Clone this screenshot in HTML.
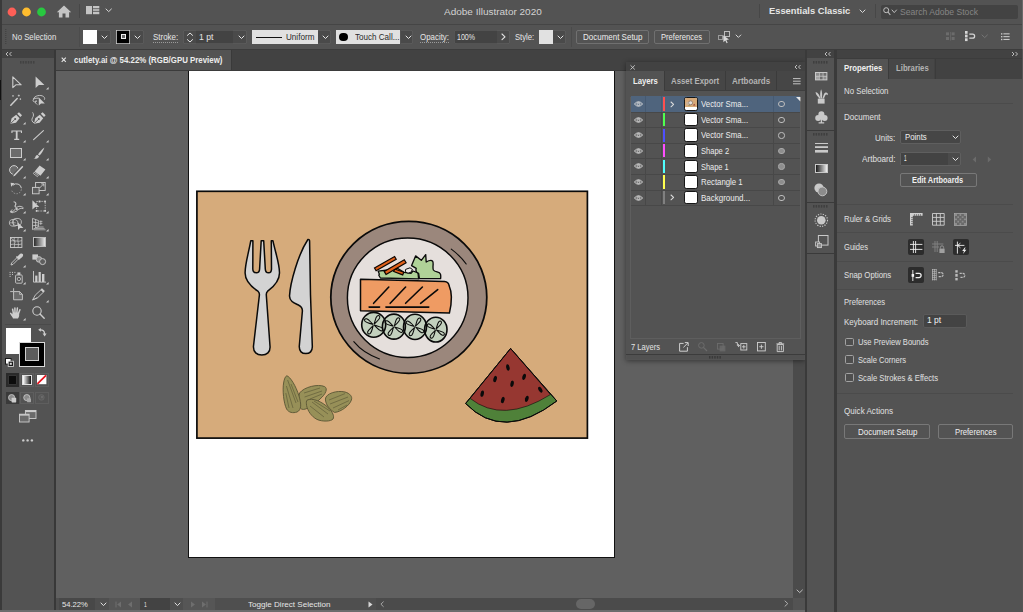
<!DOCTYPE html>
<html><head><meta charset="utf-8"><title>Adobe Illustrator 2020</title>
<style>
html,body{margin:0;padding:0;background:#535353}
body{width:1023px;height:612px;position:relative;overflow:hidden;font-family:"Liberation Sans",sans-serif}
body>div,body>svg,body>span{position:absolute}
svg{overflow:visible}
.t{white-space:pre;line-height:1;transform-origin:0 50%;display:block}
</style></head><body>
<div style="left:0px;top:0px;width:1023px;height:612px;background:#383838;"></div><div style="left:0px;top:0px;width:1023px;height:24.5px;background:#535353;"></div><div style="left:0px;top:24px;width:1023px;height:1px;background:#454545;"></div><div style="left:0px;top:25px;width:1023px;height:24px;background:#535353;"></div><div style="left:0px;top:48.6px;width:1023px;height:1px;background:#3c3c3c;"></div><div style="left:0px;top:0px;width:1.5px;height:612px;background:#3a3a3a;"></div><div style="left:0px;top:80px;width:1px;height:20px;background:#111;"></div><div style="left:1021.7px;top:0px;width:1.3px;height:49px;background:#6a6a6a;"></div><svg style="left:0px;top:0px" width="60" height="24" viewBox="0 0 60 24"><circle cx="12" cy="12" r="4.4" fill="#fe5f57"/><circle cx="26.5" cy="12" r="4.4" fill="#febc2e"/><circle cx="41.5" cy="12" r="4.4" fill="#28c840"/></svg><svg style="left:56px;top:5px" width="16" height="13" viewBox="0 0 16 13"><path d="M8 0.6L0.8 7.2H2.9V12.4H6.5V8.6H9.5V12.4H13.1V7.2H15.2Z" fill="#c4c4c4"/></svg><div style="left:79px;top:4px;width:1px;height:14px;background:#474747;"></div><svg style="left:86px;top:6px" width="14" height="9" viewBox="0 0 14 9"><rect x="0" y="0" width="6" height="8.2" fill="#c4c4c4"/><rect x="7" y="0" width="6.3" height="2.3" fill="#c4c4c4"/><rect x="7" y="3" width="6.3" height="2.3" fill="#b0b0b0"/><rect x="7" y="6" width="6.3" height="2.2" fill="#c4c4c4"/></svg><svg style="left:105.2px;top:8.2px" width="7.4" height="4.6" viewBox="-1 -1 7.4 4.6"><path d="M0 0L2.7 2.6L5.4 0" fill="none" stroke="#d8d8d8" stroke-width="1" stroke-linecap="round" stroke-linejoin="round"/></svg><span class="t" style="left:443.5px;top:7.11px;font-size:9.67px;font-weight:400;color:#d2d2d2;transform:scaleX(1.0351);">Adobe Illustrator 2020</span><div style="left:759px;top:4px;width:1px;height:14px;background:#474747;"></div><span class="t" style="left:769px;top:6.01px;font-size:9.67px;font-weight:700;color:#e6e6e6;transform:scaleX(0.9646);">Essentials Classic</span><svg style="left:859px;top:9.4px" width="7" height="4.5" viewBox="-1 -1 7 4.5"><path d="M0 0L2.5 2.5L5 0" fill="none" stroke="#d8d8d8" stroke-width="1" stroke-linecap="round" stroke-linejoin="round"/></svg><div style="left:875px;top:4px;width:1px;height:14px;background:#474747;"></div><div style="left:881px;top:5px;width:137px;height:13.5px;background:#434343;border-radius:2px"></div><svg style="left:883px;top:7px" width="8" height="9" viewBox="0 0 8 9"><circle cx="3.2" cy="3.2" r="2.5" fill="none" stroke="#c0c0c0" stroke-width="1"/><path d="M5 5L7.3 8" stroke="#c0c0c0" stroke-width="1.1"/></svg><svg style="left:891px;top:9.3px" width="6.5" height="4.6" viewBox="-1 -1 6.5 4.6"><path d="M0 0L2.25 2.6L4.5 0" fill="none" stroke="#bdbdbd" stroke-width="1" stroke-linecap="round" stroke-linejoin="round"/></svg><span class="t" style="left:899.5px;top:8.52px;font-size:8.28px;font-weight:400;color:#858585;transform:scaleX(1.0413);">Search Adobe Stock</span><svg style="left:5px;top:29px" width="2" height="15" viewBox="0 0 2 15"><rect x="0.3" y="0" width="1" height="1" fill="#3e3e3e"/><rect x="0.3" y="2" width="1" height="1" fill="#3e3e3e"/><rect x="0.3" y="4" width="1" height="1" fill="#3e3e3e"/><rect x="0.3" y="6" width="1" height="1" fill="#3e3e3e"/><rect x="0.3" y="8" width="1" height="1" fill="#3e3e3e"/><rect x="0.3" y="10" width="1" height="1" fill="#3e3e3e"/><rect x="0.3" y="12" width="1" height="1" fill="#3e3e3e"/><rect x="0.3" y="14" width="1" height="1" fill="#3e3e3e"/></svg><span class="t" style="left:12px;top:32.98px;font-size:8.37px;font-weight:400;color:#e6e6e6;transform:scaleX(0.9345);">No Selection</span><div style="left:79px;top:27px;width:1px;height:20px;background:#4c4c4c;"></div><div style="left:83px;top:29.7px;width:14.3px;height:14.3px;background:#fff;"></div><div style="left:97.3px;top:29.6px;width:13.3px;height:14.6px;background:#4a4a4a;border-radius:0 2.5px 2.5px 0;box-shadow:inset -0.8px 0 0 #5e5e5e,inset 0 0.8px 0 #5e5e5e,inset 0 -0.8px 0 #5e5e5e"></div><svg style="left:101.45px;top:34.9px" width="7" height="4.5" viewBox="-1 -1 7 4.5"><path d="M0 0L2.5 2.5L5 0" fill="none" stroke="#e4e4e4" stroke-width="1" stroke-linecap="round" stroke-linejoin="round"/></svg><div style="left:116px;top:29.7px;width:14.3px;height:14.3px;background:#000;box-shadow:inset 0 0 0 0.8px #d0d0d0"></div><div style="left:120.8px;top:34.4px;width:4.8px;height:4.8px;background:#666;box-shadow:inset 0 0 0 1px #eee"></div><div style="left:130.3px;top:29.6px;width:13.3px;height:14.6px;background:#4a4a4a;border-radius:0 2.5px 2.5px 0;box-shadow:inset -0.8px 0 0 #5e5e5e,inset 0 0.8px 0 #5e5e5e,inset 0 -0.8px 0 #5e5e5e"></div><svg style="left:134.45000000000002px;top:34.9px" width="7" height="4.5" viewBox="-1 -1 7 4.5"><path d="M0 0L2.5 2.5L5 0" fill="none" stroke="#e4e4e4" stroke-width="1" stroke-linecap="round" stroke-linejoin="round"/></svg><span class="t" style="left:152.8px;top:32.98px;font-size:8.37px;font-weight:400;color:#e6e6e6;transform:scaleX(0.9515);">Stroke:</span><div style="left:152.8px;top:42.2px;width:25.2px;height:0;border-top:1px dotted #9a9a9a"></div><div style="left:182.5px;top:29.6px;width:13.3px;height:14.6px;background:#4a4a4a;border-radius:2.5px 0 0 2.5px;box-shadow:inset 0.8px 0 0 #5e5e5e,inset 0 0.8px 0 #5e5e5e,inset 0 -0.8px 0 #5e5e5e"></div><svg style="left:185.5px;top:31.5px" width="8" height="11" viewBox="0 0 8 11"><path d="M1.4 3.4L4 1L6.6 3.4M1.4 7.6L4 10L6.6 7.6" fill="none" stroke="#e4e4e4" stroke-width="1" stroke-linecap="round" stroke-linejoin="round"/></svg><div style="left:196.2px;top:29.6px;width:36.8px;height:14.6px;background:#434343;box-shadow:inset 0 0.8px 0 #5a5a5a,inset 0 -0.8px 0 #5a5a5a"></div><span class="t" style="left:198.6px;top:32.98px;font-size:8.37px;font-weight:400;color:#e6e6e6;transform:scaleX(1.0320);">1 pt</span><div style="left:233.4px;top:29.6px;width:13.3px;height:14.6px;background:#4a4a4a;border-radius:0 2.5px 2.5px 0;box-shadow:inset -0.8px 0 0 #5e5e5e,inset 0 0.8px 0 #5e5e5e,inset 0 -0.8px 0 #5e5e5e"></div><svg style="left:237.55px;top:34.9px" width="7" height="4.5" viewBox="-1 -1 7 4.5"><path d="M0 0L2.5 2.5L5 0" fill="none" stroke="#e4e4e4" stroke-width="1" stroke-linecap="round" stroke-linejoin="round"/></svg><div style="left:252px;top:29.7px;width:66px;height:14.3px;background:#e1e1e1;"></div><div style="left:256.3px;top:37.1px;width:26px;height:1.1px;background:#111;"></div><span class="t" style="left:285.6px;top:33.18px;font-size:8.37px;font-weight:400;color:#2a2a2a;transform:scaleX(0.9704);">Uniform</span><div style="left:318.2px;top:29.6px;width:12.8px;height:14.6px;background:#4a4a4a;border-radius:0 2.5px 2.5px 0;box-shadow:inset -0.8px 0 0 #5e5e5e,inset 0 0.8px 0 #5e5e5e,inset 0 -0.8px 0 #5e5e5e"></div><svg style="left:322.09999999999997px;top:34.9px" width="7" height="4.5" viewBox="-1 -1 7 4.5"><path d="M0 0L2.5 2.5L5 0" fill="none" stroke="#e4e4e4" stroke-width="1" stroke-linecap="round" stroke-linejoin="round"/></svg><div style="left:336.2px;top:29.7px;width:64.3px;height:14.3px;background:#e1e1e1;"></div><div style="left:339px;top:32.5px;width:8.8px;height:8.8px;border-radius:50%;background:#000"></div><span class="t" style="left:354.6px;top:33.18px;font-size:8.37px;font-weight:400;color:#2a2a2a;transform:scaleX(0.9652);">Touch Call...</span><div style="left:400.7px;top:29.6px;width:12.8px;height:14.6px;background:#4a4a4a;border-radius:0 2.5px 2.5px 0;box-shadow:inset -0.8px 0 0 #5e5e5e,inset 0 0.8px 0 #5e5e5e,inset 0 -0.8px 0 #5e5e5e"></div><svg style="left:404.59999999999997px;top:34.9px" width="7" height="4.5" viewBox="-1 -1 7 4.5"><path d="M0 0L2.5 2.5L5 0" fill="none" stroke="#e4e4e4" stroke-width="1" stroke-linecap="round" stroke-linejoin="round"/></svg><span class="t" style="left:419.8px;top:32.98px;font-size:8.37px;font-weight:400;color:#e6e6e6;transform:scaleX(0.9455);">Opacity:</span><div style="left:419.8px;top:42.2px;width:29px;height:0;border-top:1px dotted #9a9a9a"></div><div style="left:453.8px;top:29.6px;width:43.2px;height:14.6px;background:#434343;border-radius:2.5px 0 0 2.5px;box-shadow:inset 0.8px 0 0 #5a5a5a,inset 0 0.8px 0 #5a5a5a,inset 0 -0.8px 0 #5a5a5a"></div><span class="t" style="left:457px;top:32.98px;font-size:8.37px;font-weight:400;color:#e6e6e6;transform:scaleX(0.8415);">100%</span><div style="left:497.4px;top:29.6px;width:12.8px;height:14.6px;background:#4a4a4a;border-radius:0 2.5px 2.5px 0;box-shadow:inset -0.8px 0 0 #5e5e5e,inset 0 0.8px 0 #5e5e5e,inset 0 -0.8px 0 #5e5e5e"></div><svg style="left:501.3px;top:33.2px" width="5" height="7.6" viewBox="-1 -1 5 7.6"><path d="M0 0L3 2.8L0 5.6" fill="none" stroke="#e4e4e4" stroke-width="1.1" stroke-linecap="round" stroke-linejoin="round"/></svg><span class="t" style="left:514.8px;top:32.98px;font-size:8.37px;font-weight:400;color:#e6e6e6;transform:scaleX(0.9177);">Style:</span><div style="left:538.6px;top:29.7px;width:14.3px;height:14.3px;background:#e1e1e1;"></div><div style="left:553px;top:29.6px;width:13px;height:14.6px;background:#4a4a4a;border-radius:0 2.5px 2.5px 0;box-shadow:inset -0.8px 0 0 #5e5e5e,inset 0 0.8px 0 #5e5e5e,inset 0 -0.8px 0 #5e5e5e"></div><svg style="left:557.0px;top:34.9px" width="7" height="4.5" viewBox="-1 -1 7 4.5"><path d="M0 0L2.5 2.5L5 0" fill="none" stroke="#e4e4e4" stroke-width="1" stroke-linecap="round" stroke-linejoin="round"/></svg><div style="left:571px;top:27px;width:1px;height:20px;background:#4a4a4a;"></div><div style="left:576.3px;top:29.8px;width:73.20000000000005px;height:13.999999999999996px;box-sizing:border-box;border:1px solid #707070;border-radius:2px"></div><span class="t" style="left:583px;top:33.08px;font-size:8.37px;font-weight:400;color:#ececec;transform:scaleX(0.9553);">Document Setup</span><div style="left:654px;top:29.8px;width:55.89999999999998px;height:13.999999999999996px;box-sizing:border-box;border:1px solid #707070;border-radius:2px"></div><span class="t" style="left:661px;top:33.08px;font-size:8.37px;font-weight:400;color:#ececec;transform:scaleX(0.9095);">Preferences</span><svg style="left:717.5px;top:30.5px" width="13" height="13" viewBox="0 0 13 13"><rect x="0.5" y="4.5" width="4" height="4" fill="none" stroke="#9a9a9a" stroke-width="1"/><rect x="6.5" y="0.5" width="5" height="5" fill="none" stroke="#bdbdbd" stroke-width="1"/><path d="M5.2 4.2L11 8.6L8.4 9L9.7 11.8L8.6 12.3L7.3 9.5L5.4 11.2Z" fill="#d8d8d8"/></svg><svg style="left:735.4px;top:34.3px" width="6.8" height="4.4" viewBox="-1 -1 6.8 4.4"><path d="M0 0L2.4 2.4L4.8 0" fill="none" stroke="#d8d8d8" stroke-width="1" stroke-linecap="round" stroke-linejoin="round"/></svg><svg style="left:946px;top:32px" width="10" height="9" viewBox="0 0 10 9"><rect x="0" y="0.3" width="3" height="3" fill="#6c6c6c"/><rect x="5.6" y="0.3" width="3" height="3" fill="#6c6c6c"/><rect x="0" y="5" width="3" height="3" fill="#6c6c6c"/><rect x="5.6" y="5" width="3" height="3" fill="#6c6c6c"/><rect x="4" y="0" width="0.7" height="8.6" fill="#6c6c6c"/></svg><svg style="left:964.5px;top:31px" width="12" height="11" viewBox="0 0 12 11"><rect x="0" y="0" width="2.6" height="2.8" fill="#d6d6d6"/><rect x="0" y="3.6" width="2.6" height="2.8" fill="#d6d6d6"/><rect x="0" y="7.3" width="2.6" height="2.8" fill="#d6d6d6"/><path d="M4.3 3.2H7.6A2 2 0 0 1 7.6 7.2H4.3" fill="none" stroke="#d6d6d6" stroke-width="1.3"/></svg><svg style="left:981px;top:34.4px" width="7.4" height="4.6" viewBox="-1 -1 7.4 4.6"><path d="M0 0L2.7 2.6L5.4 0" fill="none" stroke="#757575" stroke-width="1" stroke-linecap="round" stroke-linejoin="round"/></svg><svg style="left:1001px;top:33px" width="9" height="8" viewBox="0 0 9 8"><rect x="0" y="0.2" width="1.4" height="1.4" fill="#c8c8c8"/><rect x="2.4" y="0.3" width="6.2" height="1.1" fill="#c8c8c8"/><rect x="0" y="3" width="1.4" height="1.4" fill="#c8c8c8"/><rect x="2.4" y="3.1" width="6.2" height="1.1" fill="#c8c8c8"/><rect x="0" y="5.8" width="1.4" height="1.4" fill="#c8c8c8"/><rect x="2.4" y="5.9" width="6.2" height="1.1" fill="#c8c8c8"/></svg><div style="left:2px;top:49.5px;width:52px;height:9px;background:#424242;"></div><div style="left:2px;top:58.3px;width:52px;height:553.7px;background:#535353;"></div><svg style="left:5px;top:51px" width="8" height="6" viewBox="-1 -1 8 6"><path d="M2 0L0 2L2 4M5.5 0L3.5 2L5.5 4" fill="none" stroke="#bdbdbd" stroke-width="1"/></svg><svg style="left:20px;top:61px" width="15.600000000000001" height="3" viewBox="0 0 15.600000000000001 3"><rect x="0.0" y="0" width="1.5" height="2.6" fill="#424242"/><rect x="2.6" y="0" width="1.5" height="2.6" fill="#424242"/><rect x="5.2" y="0" width="1.5" height="2.6" fill="#424242"/><rect x="7.800000000000001" y="0" width="1.5" height="2.6" fill="#424242"/><rect x="10.4" y="0" width="1.5" height="2.6" fill="#424242"/><rect x="13.0" y="0" width="1.5" height="2.6" fill="#424242"/></svg><div style="left:56.3px;top:70.2px;width:749px;height:527.8px;background:#606060;"></div><svg style="left:0;top:0" width="1023" height="612" viewBox="0 0 1023 612"><rect x="188.5" y="69.5" width="426" height="488" fill="#fff" stroke="#111" stroke-width="1"/><rect x="196.9" y="191.3" width="390.5" height="246.8" fill="#d6ab7b" stroke="#0a0a0a" stroke-width="1.7"/><path d="M250.8 240.7 L252.9 240.7 L252.8 269 Q252.9 272.8 256.2 272.8 Q259.5 272.8 259.6 269 L261.2 240.7 L263.7 240.7 L265.3 269 Q265.4 272.8 268.6 272.8 Q271.4 272.8 271.5 269 L271.3 240.7 L272.9 240.7 C275.5 253 279.6 264 279.5 273 C279.4 283 271 288.5 267.6 291.2 C266.4 292.4 266.2 293.6 266.3 295 L270 346 C270.6 352.4 266.6 355 261.8 355 C257 355 253 352.4 253.5 346 L259.4 295 C259.5 293.6 259.3 292.4 258 291.2 C254 288.5 245.2 283 245.1 273 C245 264 248.6 253 250.8 240.7 Z" fill="#d3d3d3" stroke="#0a0a0a" stroke-width="1.5" stroke-linejoin="round"/><path d="M307.9 239.5 C309 239.3 309.6 240 309.6 241.2 L310.5 295 L312.3 346 C312.6 351.5 309.6 353.6 305.8 353.6 C302 353.6 299 351.5 299.3 346 L302.4 311 C302.5 308 301 306.2 298.4 305 C294.5 303.2 289.6 301.6 289.5 296 C290.2 283 298 254.5 307.9 239.5 Z" fill="#d3d3d3" stroke="#0a0a0a" stroke-width="1.5" stroke-linejoin="round"/><ellipse cx="408.8" cy="297.3" rx="78" ry="76" fill="#9b877c" stroke="#0a0a0a" stroke-width="1.75"/><ellipse cx="407.7" cy="297.8" rx="60.3" ry="59.7" fill="#e5dfdc" stroke="#0a0a0a" stroke-width="1.45"/><path d="M451.3 249.1 Q460.5 256 466.2 264" fill="none" stroke="#0a0a0a" stroke-width="1.1" stroke-linecap="round"/><path d="M353.8 341.7 Q363.5 353.5 379.5 358.9" fill="none" stroke="#0a0a0a" stroke-width="1.1" stroke-linecap="round"/><path d="M378.2 271.2 L379.4 274.2 L378.8 275.2 L380.4 278 L418.6 278.9 L418 272.8 L413 271 L411 273.4 L404 272.4 L397 268 L388 270 Z" fill="#b0d298" stroke="#0a0a0a" stroke-width="1.3" stroke-linejoin="round"/><path d="M405.6 269.4 L410 267.8 L412.4 269.4 L411 272.2 L408 273.2 L405.4 271.8 Z" fill="#f0ece8" stroke="#0a0a0a" stroke-width="1.0" stroke-linejoin="round"/><path d="M411.6 265.6 L415.6 255.9 L421.3 260.3 L425.7 254.6 L426.2 262 C428 261 431.4 259.8 432.6 261.2 C434 263 432.2 267.4 433.4 270 C435 272.4 439.6 271.6 440.4 274 C441 275.6 440.8 277 440.6 278.6 L419.4 278.6 L418.6 273.4 C416.4 272.6 415.6 270.4 416.2 268.4 Z" fill="#b0d298" stroke="#0a0a0a" stroke-width="1.35" stroke-linejoin="round"/><path d="M393.7 271.5L402.7 274.9L403.7 272.3L394.7 268.9Z" fill="#e2611a" stroke="#0d0500" stroke-width="1.2" stroke-linejoin="miter"/><path d="M376.1 270.8L396.2 259.3L394.6 256.5L374.5 268.0Z" fill="#e2611a" stroke="#0d0500" stroke-width="1.2" stroke-linejoin="miter"/><path d="M386.0 274.4L406.1 262.7L404.3 259.7L384.2 271.4Z" fill="#e2611a" stroke="#0d0500" stroke-width="1.2" stroke-linejoin="miter"/><path d="M360.5 279.3 L444.5 281.6 Q448.6 282 449.2 286 C452 292 452.2 301 449.4 313.1 L360.5 310.7 Z" fill="#ef9b63" stroke="#0a0a0a" stroke-width="1.5" stroke-linejoin="round"/><path d="M388.8 287L373.6 303.3" stroke="#0a0a0a" stroke-width="1.6" stroke-linecap="round"/><path d="M405.6 287L390.2 303.3" stroke="#0a0a0a" stroke-width="1.6" stroke-linecap="round"/><path d="M422.4 287L405.6 303.3" stroke="#0a0a0a" stroke-width="1.6" stroke-linecap="round"/><path d="M437.7 289.6L420.6 303.3" stroke="#0a0a0a" stroke-width="1.6" stroke-linecap="round"/><path d="M369.1 307.1L379.6 307.1" stroke="#0a0a0a" stroke-width="1.6" stroke-linecap="round"/><path d="M385.9 307.1L428.8 307.1" stroke="#0a0a0a" stroke-width="1.6" stroke-linecap="round"/><ellipse cx="373.7" cy="324.8" rx="12.0" ry="12.4" fill="#c3d1be"/><ellipse cx="393.9" cy="326.6" rx="11.5" ry="12.5" fill="#c3d1be"/><ellipse cx="415" cy="326.9" rx="11.5" ry="12.6" fill="#c3d1be"/><ellipse cx="435.8" cy="329.6" rx="11.2" ry="12.4" fill="#c3d1be"/><ellipse cx="373.7" cy="324.8" rx="12.0" ry="12.4" fill="none" stroke="#0a0a0a" stroke-width="1.6"/><path transform="translate(373.7 324.8) rotate(31)" d="M0.6 0 C4.75 -0.81 6.55 -2.03 9.08 -1.54 C10.98 -0.97 10.98 0.97 9.08 1.54 C6.55 2.03 4.75 0.81 0.6 0Z" fill="none" stroke="#0a0a0a" stroke-width="1.05"/><path transform="translate(373.7 324.8) rotate(121)" d="M0.6 0 C4.75 -0.81 6.55 -2.03 9.08 -1.54 C10.98 -0.97 10.98 0.97 9.08 1.54 C6.55 2.03 4.75 0.81 0.6 0Z" fill="none" stroke="#0a0a0a" stroke-width="1.05"/><path transform="translate(373.7 324.8) rotate(211)" d="M0.6 0 C4.75 -0.81 6.55 -2.03 9.08 -1.54 C10.98 -0.97 10.98 0.97 9.08 1.54 C6.55 2.03 4.75 0.81 0.6 0Z" fill="none" stroke="#0a0a0a" stroke-width="1.05"/><path transform="translate(373.7 324.8) rotate(301)" d="M0.6 0 C4.75 -0.81 6.55 -2.03 9.08 -1.54 C10.98 -0.97 10.98 0.97 9.08 1.54 C6.55 2.03 4.75 0.81 0.6 0Z" fill="none" stroke="#0a0a0a" stroke-width="1.05"/><ellipse cx="393.9" cy="326.6" rx="11.5" ry="12.5" fill="none" stroke="#0a0a0a" stroke-width="1.6"/><path transform="translate(393.9 326.6) rotate(31)" d="M0.6 0 C4.55 -0.78 6.27 -1.94 8.70 -1.47 C10.52 -0.93 10.52 0.93 8.70 1.47 C6.27 1.94 4.55 0.78 0.6 0Z" fill="none" stroke="#0a0a0a" stroke-width="1.05"/><path transform="translate(393.9 326.6) rotate(121)" d="M0.6 0 C4.55 -0.78 6.27 -1.94 8.70 -1.47 C10.52 -0.93 10.52 0.93 8.70 1.47 C6.27 1.94 4.55 0.78 0.6 0Z" fill="none" stroke="#0a0a0a" stroke-width="1.05"/><path transform="translate(393.9 326.6) rotate(211)" d="M0.6 0 C4.55 -0.78 6.27 -1.94 8.70 -1.47 C10.52 -0.93 10.52 0.93 8.70 1.47 C6.27 1.94 4.55 0.78 0.6 0Z" fill="none" stroke="#0a0a0a" stroke-width="1.05"/><path transform="translate(393.9 326.6) rotate(301)" d="M0.6 0 C4.55 -0.78 6.27 -1.94 8.70 -1.47 C10.52 -0.93 10.52 0.93 8.70 1.47 C6.27 1.94 4.55 0.78 0.6 0Z" fill="none" stroke="#0a0a0a" stroke-width="1.05"/><ellipse cx="415" cy="326.9" rx="11.5" ry="12.6" fill="none" stroke="#0a0a0a" stroke-width="1.6"/><path transform="translate(415 326.9) rotate(31)" d="M0.6 0 C4.55 -0.78 6.27 -1.94 8.70 -1.47 C10.52 -0.93 10.52 0.93 8.70 1.47 C6.27 1.94 4.55 0.78 0.6 0Z" fill="none" stroke="#0a0a0a" stroke-width="1.05"/><path transform="translate(415 326.9) rotate(121)" d="M0.6 0 C4.55 -0.78 6.27 -1.94 8.70 -1.47 C10.52 -0.93 10.52 0.93 8.70 1.47 C6.27 1.94 4.55 0.78 0.6 0Z" fill="none" stroke="#0a0a0a" stroke-width="1.05"/><path transform="translate(415 326.9) rotate(211)" d="M0.6 0 C4.55 -0.78 6.27 -1.94 8.70 -1.47 C10.52 -0.93 10.52 0.93 8.70 1.47 C6.27 1.94 4.55 0.78 0.6 0Z" fill="none" stroke="#0a0a0a" stroke-width="1.05"/><path transform="translate(415 326.9) rotate(301)" d="M0.6 0 C4.55 -0.78 6.27 -1.94 8.70 -1.47 C10.52 -0.93 10.52 0.93 8.70 1.47 C6.27 1.94 4.55 0.78 0.6 0Z" fill="none" stroke="#0a0a0a" stroke-width="1.05"/><ellipse cx="435.8" cy="329.6" rx="11.2" ry="12.4" fill="none" stroke="#0a0a0a" stroke-width="1.6"/><path transform="translate(435.8 329.6) rotate(31)" d="M0.6 0 C4.44 -0.76 6.11 -1.89 8.48 -1.44 C10.25 -0.91 10.25 0.91 8.48 1.44 C6.11 1.89 4.44 0.76 0.6 0Z" fill="none" stroke="#0a0a0a" stroke-width="1.05"/><path transform="translate(435.8 329.6) rotate(121)" d="M0.6 0 C4.44 -0.76 6.11 -1.89 8.48 -1.44 C10.25 -0.91 10.25 0.91 8.48 1.44 C6.11 1.89 4.44 0.76 0.6 0Z" fill="none" stroke="#0a0a0a" stroke-width="1.05"/><path transform="translate(435.8 329.6) rotate(211)" d="M0.6 0 C4.44 -0.76 6.11 -1.89 8.48 -1.44 C10.25 -0.91 10.25 0.91 8.48 1.44 C6.11 1.89 4.44 0.76 0.6 0Z" fill="none" stroke="#0a0a0a" stroke-width="1.05"/><path transform="translate(435.8 329.6) rotate(301)" d="M0.6 0 C4.44 -0.76 6.11 -1.89 8.48 -1.44 C10.25 -0.91 10.25 0.91 8.48 1.44 C6.11 1.89 4.44 0.76 0.6 0Z" fill="none" stroke="#0a0a0a" stroke-width="1.05"/><path d="M510.6 348.5 L465.6 403.5 Q503 442 556.8 401 Z" fill="#4f8139" stroke="#0a0a0a" stroke-width="1" stroke-linejoin="round"/><path d="M510.6 348.5 L470.1 398.4 Q503 424.2 550.4 394.6 Z" fill="#963731" stroke="#0a0a0a" stroke-width="0.6" stroke-linejoin="round"/><path d="M510.6 348.5 L465.6 403.5 Q503 442 556.8 401 Z" fill="none" stroke="#0a0a0a" stroke-width="1" stroke-linejoin="round"/><ellipse cx="507.9" cy="367.5" rx="1.7" ry="3.2" fill="#0a0a0a" transform="rotate(-10 507.9 367.5)"/><ellipse cx="495.1" cy="379" rx="1.7" ry="3.2" fill="#0a0a0a" transform="rotate(15 495.1 379)"/><ellipse cx="524.1" cy="376.8" rx="1.7" ry="3.2" fill="#0a0a0a" transform="rotate(15 524.1 376.8)"/><ellipse cx="512.1" cy="383.8" rx="1.7" ry="3.2" fill="#0a0a0a" transform="rotate(10 512.1 383.8)"/><ellipse cx="482.2" cy="393.7" rx="1.7" ry="3.2" fill="#0a0a0a" transform="rotate(10 482.2 393.7)"/><ellipse cx="540.3" cy="389.7" rx="1.7" ry="3.2" fill="#0a0a0a" transform="rotate(-30 540.3 389.7)"/><ellipse cx="502.8" cy="400" rx="1.7" ry="3.2" fill="#0a0a0a" transform="rotate(15 502.8 400)"/><ellipse cx="526.8" cy="398.8" rx="1.7" ry="3.2" fill="#0a0a0a" transform="rotate(15 526.8 398.8)"/><path d="M299.6 393 C304 387 318 383.6 324.6 386.6 C328 388.4 326 394 320 399 C313 406 303 412.4 300.4 408 C298.6 404 298 397 299.6 393 Z" fill="#979058" stroke="#5e5937" stroke-width="0.95"/><path d="M325.4 399 C325.6 393.6 337 390 345 392 C350 393.4 352.6 396.6 351.4 400 C349.6 405.4 341 412 334.6 412.4 C330 410 325.4 404.6 325.4 399 Z" fill="#979058" stroke="#5e5937" stroke-width="0.95"/><path d="M286.8 375.8 C290 376.4 296 386 299 396 C301.4 404 301.6 410 297 412 C293 413.4 288.6 412.6 286.6 409 C283.6 403 282.4 390 283.6 383 C284.2 379 285.4 376.2 286.8 375.8 Z" fill="#979058" stroke="#5e5937" stroke-width="0.95"/><path d="M307 400.2 C312 397.4 322 401.4 328.6 408 C332.6 412 334.6 416.4 333 419 C331 421.6 322 421.8 317 419.4 C311.4 416.6 307.6 410.6 306.6 405.6 C306.2 403 306.2 401 307 400.2 Z" fill="#979058" stroke="#5e5937" stroke-width="0.95"/><path d="M287.6 380L296 403M286.4 386L293 408M285.8 393L289 408M291 384L298 402" stroke="#625d3a" stroke-width="0.7" fill="none"/><path d="M304 393L320 388M304.6 397L322 391M310 399L322 394" stroke="#625d3a" stroke-width="0.7" fill="none"/><path d="M329 400L345 393.6M330 404L348 397M333 408L349 400.6M338 410L347 405" stroke="#625d3a" stroke-width="0.7" fill="none"/><path d="M312 402L328 414M310 406L324 417M314 401L330 411" stroke="#625d3a" stroke-width="0.7" fill="none"/></svg><div style="left:56.3px;top:49.6px;width:749px;height:20.6px;background:#424242;"></div><div style="left:56.3px;top:69.5px;width:749px;height:0.9px;background:#3b3b3b;"></div><div style="left:56.3px;top:50.3px;width:174.7px;height:19.9px;background:#535353;"></div><svg style="left:61px;top:57.3px" width="6" height="6" viewBox="0 0 6 6"><path d="M0.7 0.7L4.8 4.8M4.8 0.7L0.7 4.8" stroke="#e6e6e6" stroke-width="1.1"/></svg><span class="t" style="left:73.6px;top:57.02px;font-size:8.28px;font-weight:700;color:#ececec;transform:scaleX(0.9523);">cutlety.ai @ 54.22% (RGB/GPU Preview)</span><div style="left:230.6px;top:50.3px;width:0.9px;height:19.9px;background:#3a3a3a;"></div><div style="left:793px;top:70.2px;width:11.6px;height:527.8px;background:#4b4b4b;"></div><svg style="left:796.2px;top:589.2px" width="7.4" height="4.6" viewBox="-1 -1 7.4 4.6"><path d="M0 0L2.7 2.6L5.4 0" fill="none" stroke="#c0c0c0" stroke-width="1" stroke-linecap="round" stroke-linejoin="round"/></svg><div style="left:56.3px;top:597.8px;width:749px;height:11.9px;background:#4b4b4b;"></div><div style="left:56.3px;top:597.8px;width:320px;height:11.9px;background:#4f4f4f;"></div><div style="left:58.8px;top:598px;width:36.5px;height:11.5px;background:#484848;"></div><span class="t" style="left:61.5px;top:600.77px;font-size:8.0px;font-weight:400;color:#e6e6e6;transform:scaleX(0.9543);">54.22%</span><svg style="left:99.5px;top:602px" width="7" height="4.6" viewBox="-1 -1 7 4.6"><path d="M0 0L2.5 2.6L5 0" fill="none" stroke="#e0e0e0" stroke-width="1" stroke-linecap="round" stroke-linejoin="round"/></svg><div style="left:109px;top:598px;width:31.4px;height:11.5px;background:#565656;"></div><svg style="left:115px;top:600.5px" width="22" height="7" viewBox="0 0 22 7"><rect x="0.5" y="0.5" width="1" height="6" fill="#6e6e6e"/><path d="M6 0.5V6.5L2.2 3.5Z" fill="#6e6e6e"/><path d="M17 0.5V6.5L13 3.5Z" fill="#6e6e6e"/></svg><div style="left:140.4px;top:598px;width:29.6px;height:11.5px;background:#434343;"></div><span class="t" style="left:143.5px;top:600.97px;font-size:8.0px;font-weight:400;color:#e6e6e6;transform:scaleX(0.6288);">1</span><svg style="left:173.5px;top:602px" width="7" height="4.6" viewBox="-1 -1 7 4.6"><path d="M0 0L2.5 2.6L5 0" fill="none" stroke="#e0e0e0" stroke-width="1" stroke-linecap="round" stroke-linejoin="round"/></svg><div style="left:183.4px;top:598px;width:32px;height:11.5px;background:#565656;"></div><svg style="left:190px;top:600.5px" width="22" height="7" viewBox="0 0 22 7"><path d="M1 0.5V6.5L5 3.5Z" fill="#6e6e6e"/><path d="M12 0.5V6.5L16 3.5Z" fill="#6e6e6e"/><rect x="16.5" y="0.5" width="1" height="6" fill="#6e6e6e"/></svg><span class="t" style="left:247.5px;top:601.17px;font-size:8.0px;font-weight:400;color:#e6e6e6;transform:scaleX(1.0082);">Toggle Direct Selection</span><svg style="left:367.5px;top:600.5px" width="5" height="7" viewBox="0 0 5 7"><path d="M0.5 0.5V6.5L4.5 3.5Z" fill="#d8d8d8"/></svg><svg style="left:380px;top:600.8px" width="5" height="7" viewBox="0 0 5 7"><path d="M3.6 0.6L0.9 3.2L3.6 5.8" fill="none" stroke="#a8a8a8" stroke-width="1"/></svg><div style="left:576px;top:599px;width:18.5px;height:10px;border-radius:5px;background:#666"></div><svg style="left:784px;top:600.2px" width="4.8" height="7.2" viewBox="-1 -1 4.8 7.2"><path d="M0 0L2.8 2.6L0 5.2" fill="none" stroke="#b0b0b0" stroke-width="1" stroke-linecap="round" stroke-linejoin="round"/></svg><div style="left:793px;top:597.8px;width:11.6px;height:11.9px;background:#535353;"></div><div style="left:0px;top:609.6px;width:1023px;height:2.4px;background:#6c6c6c;"></div><div style="left:992px;top:609.6px;width:31px;height:2.4px;background:#1a1a1a;"></div><svg style="left:11.8px;top:75.5px" width="10" height="13" viewBox="0 0 10 13"><path d="M0.8 0.8V11.6L3.9 8.8H9.2Z" fill="none" stroke="#cdcdcd" stroke-width="1.1" stroke-linejoin="round" stroke-linecap="round"/></svg><svg style="left:34.5px;top:75.5px" width="10" height="13" viewBox="0 0 10 13"><path d="M0.6 0.4V12L3.9 8.9H9.4Z" fill="#cdcdcd"/></svg><svg style="left:45.9px;top:86.9px" width="2.6" height="2.6" viewBox="0 0 2.6 2.6"><path d="M2.6 0V2.6H0Z" fill="#cdcdcd"/></svg><svg style="left:10.3px;top:94.0px" width="12" height="12" viewBox="0 0 12 12"><path d="M0.8 11.2L7.2 4.6" stroke="#cdcdcd" stroke-width="1.5" stroke-linecap="round"/><path d="M8.8 0.6V2.6M7.8 1.6H9.8M10.4 4.4V5.8M9.7 5.1H11.1M3 1.2V2.6M2.3 1.9H3.7" stroke="#cdcdcd" stroke-width="0.8"/></svg><svg style="left:32.0px;top:94.0px" width="14" height="12" viewBox="0 0 14 12"><path d="M6.8 4.2C4.4 4 1.2 4.4 1 6.2C0.8 8.2 4 8.4 4.6 7.4C5 6.6 3.6 6.2 3.4 7.4C3.2 9 4.4 10 5.4 10.6" fill="none" stroke="#cdcdcd" stroke-width="0.9"/><path d="M1.4 5C2.4 1.8 8.6 0.2 11.6 2.6C13 3.8 12.8 5.2 12.2 5.8" fill="none" stroke="#cdcdcd" stroke-width="0.9"/><path d="M6.8 3.6V11.4L9 9.4H12.8Z" fill="#cdcdcd"/></svg><svg style="left:10.0px;top:111.6px" width="12.4" height="12" viewBox="0 0 12.4 12"><path d="M0.4 11.8L1.6 6.2L6.2 2.8L9.6 6.2L6 10.8Z" fill="#cdcdcd"/><path d="M1 11.2L4.8 7.4" stroke="#535353" stroke-width="0.9"/><circle cx="5.2" cy="7" r="1" fill="#535353"/><path d="M7.2 1.8L9 0.2L12 3.2L10.4 5Z" fill="#cdcdcd"/></svg><svg style="left:23.0px;top:122.4px" width="2.6" height="2.6" viewBox="0 0 2.6 2.6"><path d="M2.6 0V2.6H0Z" fill="#cdcdcd"/></svg><svg style="left:31.0px;top:111.6px" width="15" height="12" viewBox="0 0 15 12"><path d="M1.6 0.4C2.8 2 2.8 4 1.6 5.6C0.2 7.6 1 10.2 3.2 11" fill="none" stroke="#cdcdcd" stroke-width="0.9"/><g transform="translate(2.6 0)"><path d="M0.4 11.8L1.6 6.2L6.2 2.8L9.6 6.2L6 10.8Z" fill="#cdcdcd"/><path d="M1 11.2L4.8 7.4" stroke="#535353" stroke-width="0.9"/><circle cx="5.2" cy="7" r="1" fill="#535353"/><path d="M7.2 1.8L9 0.2L12 3.2L10.4 5Z" fill="#cdcdcd"/></g></svg><svg style="left:10.9px;top:130.4px" width="11.4" height="10.4" viewBox="0 0 11.4 10.4"><path d="M0.4 0.4H11V3H9.9V1.6H6.6V8.8H8.2V10H3.2V8.8H4.8V1.6H1.5V3H0.4Z" fill="#cdcdcd"/></svg><svg style="left:23.0px;top:140.0px" width="2.6" height="2.6" viewBox="0 0 2.6 2.6"><path d="M2.6 0V2.6H0Z" fill="#cdcdcd"/></svg><svg style="left:33.3px;top:130.4px" width="11" height="10" viewBox="0 0 11 10"><path d="M0.6 9.6L10.4 0.6" stroke="#cdcdcd" stroke-width="1.1" stroke-linecap="round"/></svg><svg style="left:45.9px;top:140.0px" width="2.6" height="2.6" viewBox="0 0 2.6 2.6"><path d="M2.6 0V2.6H0Z" fill="#cdcdcd"/></svg><svg style="left:10.4px;top:147.6px" width="12" height="10" viewBox="0 0 12 10"><rect x="0.5" y="0.5" width="11" height="9" fill="#6b6b6b" stroke="#cdcdcd" stroke-width="1"/></svg><svg style="left:23.0px;top:158.0px" width="2.6" height="2.6" viewBox="0 0 2.6 2.6"><path d="M2.6 0V2.6H0Z" fill="#cdcdcd"/></svg><svg style="left:33.0px;top:146.6px" width="12" height="12" viewBox="0 0 12 12"><path d="M11.4 0.4C9 2.2 6.2 5.4 5 7.4L6.6 8.6C8.2 6.8 10.6 3 11.4 0.4Z" fill="#cdcdcd"/><path d="M4.4 8C3 8.2 2.4 9.4 2.2 10.4C1.8 11.2 1 11.6 0.4 11.6C2.6 12.2 5.6 11.6 6 9.2Z" fill="#cdcdcd"/></svg><svg style="left:45.9px;top:158.0px" width="2.6" height="2.6" viewBox="0 0 2.6 2.6"><path d="M2.6 0V2.6H0Z" fill="#cdcdcd"/></svg><svg style="left:8.7px;top:165.0px" width="15" height="12" viewBox="0 0 15 12"><circle cx="5" cy="5" r="4.4" fill="#6b6b6b" stroke="#cdcdcd" stroke-width="1"/><path d="M5 10.6L13.6 1.6" stroke="#535353" stroke-width="3.6"/><path d="M5.4 10.2L13.4 1.8" stroke="#cdcdcd" stroke-width="1.6" stroke-linecap="round"/><path d="M4.2 11.6L5 9.8L6 10.8Z" fill="#cdcdcd"/></svg><svg style="left:23.0px;top:175.8px" width="2.6" height="2.6" viewBox="0 0 2.6 2.6"><path d="M2.6 0V2.6H0Z" fill="#cdcdcd"/></svg><svg style="left:32.5px;top:164.6px" width="13" height="12" viewBox="0 0 13 12"><path d="M6.6 0.4L12.4 4.6L7.4 10.8L1.6 6.6Z" fill="#cdcdcd"/><path d="M1.2 7.2L5.4 10.4L4.4 11.6L0.4 8.6Z" fill="none" stroke="#cdcdcd" stroke-width="0.8"/></svg><svg style="left:45.9px;top:175.8px" width="2.6" height="2.6" viewBox="0 0 2.6 2.6"><path d="M2.6 0V2.6H0Z" fill="#cdcdcd"/></svg><svg style="left:10.4px;top:182.4px" width="12" height="12.4" viewBox="0 0 12 12.4"><path d="M3 3.2A5 5 0 0 1 11.4 6.2" fill="none" stroke="#cdcdcd" stroke-width="1"/><path d="M11.4 7.4A5 5 0 0 1 1.6 8" fill="none" stroke="#9a9a9a" stroke-width="1" stroke-dasharray="1.5 1.3"/><path d="M0.6 0.8L4.6 1.2L1.2 4.8Z" fill="#cdcdcd"/></svg><svg style="left:23.0px;top:193.4px" width="2.6" height="2.6" viewBox="0 0 2.6 2.6"><path d="M2.6 0V2.6H0Z" fill="#cdcdcd"/></svg><svg style="left:32.0px;top:182.3px" width="14" height="12.6" viewBox="0 0 14 12.6"><rect x="3.6" y="0.5" width="9.6" height="8" fill="none" stroke="#cdcdcd" stroke-width="0.9"/><rect x="0.5" y="5.4" width="6.6" height="6.4" fill="#5e5e5e" stroke="#cdcdcd" stroke-width="0.9"/><path d="M7.6 6L11.6 2M9.2 1.8H11.8V4.4" fill="none" stroke="#cdcdcd" stroke-width="0.9"/></svg><svg style="left:45.9px;top:193.4px" width="2.6" height="2.6" viewBox="0 0 2.6 2.6"><path d="M2.6 0V2.6H0Z" fill="#cdcdcd"/></svg><svg style="left:9.6px;top:200.6px" width="14" height="12" viewBox="0 0 14 12"><path d="M0.6 10.8C3 10.6 4.6 9.4 6 7.4C7.6 5 10 4.6 13.4 6.6" fill="none" stroke="#cdcdcd" stroke-width="0.9"/><path d="M0.8 11C3.4 11.6 6 11 7.6 9.2C9 7.6 11 7 13.4 7.6" fill="none" stroke="#cdcdcd" stroke-width="0.9"/><path d="M3.6 0.8C5.6 1 6.6 2.6 5.4 4.2C4.4 5.4 5.4 6.4 6.6 6" fill="none" stroke="#cdcdcd" stroke-width="1.1"/><circle cx="6.8" cy="8" r="1.1" fill="#cdcdcd"/><path d="M2.2 8.4L0.2 10.8L2.8 11.8" fill="none" stroke="#cdcdcd" stroke-width="0.8"/></svg><svg style="left:23.0px;top:211.4px" width="2.6" height="2.6" viewBox="0 0 2.6 2.6"><path d="M2.6 0V2.6H0Z" fill="#cdcdcd"/></svg><svg style="left:32.0px;top:200.1px" width="14" height="12.6" viewBox="0 0 14 12.6"><path d="M0.4 0.2V9.6L3.2 7H7.2Z" fill="#cdcdcd"/><rect x="4.6" y="1.4" width="8.6" height="9.6" fill="none" stroke="#cdcdcd" stroke-width="0.8" stroke-dasharray="1.4 1"/><rect x="3.8" y="10" width="1.8" height="1.8" fill="#cdcdcd"/><rect x="12.2" y="10" width="1.8" height="1.8" fill="#cdcdcd"/><rect x="12.2" y="0.6" width="1.8" height="1.8" fill="#cdcdcd"/><rect x="6.6" y="0.6" width="1.8" height="1.8" fill="#cdcdcd"/></svg><svg style="left:45.9px;top:211.4px" width="2.6" height="2.6" viewBox="0 0 2.6 2.6"><path d="M2.6 0V2.6H0Z" fill="#cdcdcd"/></svg><svg style="left:9.1px;top:218.0px" width="15" height="12" viewBox="0 0 15 12"><ellipse cx="4.6" cy="4.8" rx="4.2" ry="3.4" fill="none" stroke="#cdcdcd" stroke-width="0.8"/><ellipse cx="8" cy="4" rx="4.4" ry="3.6" fill="none" stroke="#cdcdcd" stroke-width="0.8"/><path d="M4.4 1.6V8M0.6 4.8H6.8" stroke="#cdcdcd" stroke-width="0.6"/><path d="M9 4.6V12L11 10H14.4Z" fill="#cdcdcd"/></svg><svg style="left:23.0px;top:229.0px" width="2.6" height="2.6" viewBox="0 0 2.6 2.6"><path d="M2.6 0V2.6H0Z" fill="#cdcdcd"/></svg><svg style="left:32.0px;top:217.6px" width="14" height="12.4" viewBox="0 0 14 12.4"><path d="M0.5 0.4V11.6M0.5 0.4L6.6 2.6V8.6L0.5 11.6M3.6 1.6V10M0.5 4L6.6 5M0.5 7.8L6.6 7" fill="none" stroke="#cdcdcd" stroke-width="0.8"/><path d="M7.4 3.4H10.4M7.4 5.4H10.4M8.8 2.6V7" stroke="#cdcdcd" stroke-width="0.7"/><path d="M5.4 9H11.6M3.6 10.4H12.6M1.8 11.8H13.6" stroke="#cdcdcd" stroke-width="0.7"/></svg><svg style="left:45.9px;top:229.0px" width="2.6" height="2.6" viewBox="0 0 2.6 2.6"><path d="M2.6 0V2.6H0Z" fill="#cdcdcd"/></svg><svg style="left:10.2px;top:236.5px" width="12.4" height="11" viewBox="0 0 12.4 11"><rect x="0.5" y="0.5" width="11.4" height="10" fill="none" stroke="#cdcdcd" stroke-width="0.9"/><path d="M0.5 4C4 2.6 8 5.4 11.9 3.6M0.5 7.6C4 6.4 8 8.6 11.9 7M4.4 0.5C3.2 4 5.6 7 4.2 10.5M8.2 0.5C7 4 9.4 7 8 10.5M0.8 0.8L6 5.4" fill="none" stroke="#cdcdcd" stroke-width="0.7"/></svg><div style="left:32.6px;top:236.8px;width:13px;height:10.4px;box-sizing:border-box;border:1px solid #bdbdbd;background:linear-gradient(90deg,#2a2a2a,#e6e6e6)"></div><svg style="left:9.7px;top:253.3px" width="13" height="13" viewBox="0 0 13 13"><path d="M1 12L1.6 10L7.2 4.4L8.6 5.8L3 11.4Z" fill="none" stroke="#cdcdcd" stroke-width="0.9" stroke-linejoin="round"/><path d="M6.4 3.6L9.4 6.6M7.6 4.4L9.6 2.2C10.4 1.2 11.8 1 12.2 1.6C12.8 2.2 12 3.4 11 4.2L8.8 6" stroke="#cdcdcd" stroke-width="1.4" fill="#cdcdcd"/></svg><svg style="left:23.0px;top:264.79999999999995px" width="2.6" height="2.6" viewBox="0 0 2.6 2.6"><path d="M2.6 0V2.6H0Z" fill="#cdcdcd"/></svg><svg style="left:32.0px;top:254.1px" width="14" height="11" viewBox="0 0 14 11"><rect x="0.4" y="0.4" width="5.6" height="5.2" fill="#cdcdcd"/><circle cx="7" cy="5.4" r="2.8" fill="#8a8a8a" stroke="#cdcdcd" stroke-width="0.8"/><circle cx="10.6" cy="7.6" r="3" fill="#5e5e5e" stroke="#cdcdcd" stroke-width="0.9"/></svg><svg style="left:9.2px;top:271.3px" width="14" height="12.6" viewBox="0 0 14 12.6"><rect x="6.6" y="4" width="6.6" height="8.2" rx="0.8" fill="none" stroke="#cdcdcd" stroke-width="0.9"/><rect x="8.4" y="1.4" width="3" height="2.4" fill="#cdcdcd"/><circle cx="9.9" cy="8" r="1.7" fill="none" stroke="#cdcdcd" stroke-width="0.8"/><path d="M0.6 1.4H1.6M3 1.4H4M5.4 1.4H6.4M0.6 3.4H1.6M3 3.4H4M0.6 5.4H1.6" stroke="#cdcdcd" stroke-width="1"/></svg><svg style="left:23.0px;top:282.4px" width="2.6" height="2.6" viewBox="0 0 2.6 2.6"><path d="M2.6 0V2.6H0Z" fill="#cdcdcd"/></svg><svg style="left:32.5px;top:271.2px" width="13" height="11.6" viewBox="0 0 13 11.6"><path d="M0.5 0V11.1H13" fill="none" stroke="#cdcdcd" stroke-width="0.9"/><rect x="2.2" y="4.6" width="2.2" height="6.4" fill="#cdcdcd"/><rect x="5.6" y="1" width="2.2" height="10" fill="#cdcdcd"/><rect x="9" y="3" width="2.4" height="8" fill="#cdcdcd"/></svg><svg style="left:45.9px;top:282.4px" width="2.6" height="2.6" viewBox="0 0 2.6 2.6"><path d="M2.6 0V2.6H0Z" fill="#cdcdcd"/></svg><svg style="left:9.5px;top:288.4px" width="13" height="12.4" viewBox="0 0 13 12.4"><path d="M3.6 0.2V3.6M0.2 3.6H3.6" stroke="#cdcdcd" stroke-width="0.9"/><path d="M3.6 3.6H9.6L12.4 6.4V11.8H3.6Z" fill="#6b6b6b" stroke="#cdcdcd" stroke-width="0.9" stroke-linejoin="round"/><path d="M9.6 3.6V6.4H12.4" fill="none" stroke="#cdcdcd" stroke-width="0.7"/></svg><svg style="left:32.1px;top:288.1px" width="13" height="12.6" viewBox="0 0 13 12.6"><path d="M0.6 12L3.2 7.2L9 1.8L11.4 4.2L5.6 9.8Z" fill="none" stroke="#cdcdcd" stroke-width="0.9" stroke-linejoin="round"/><path d="M8.6 1.4L10 0.2L12.8 3L11.6 4.6Z" fill="#cdcdcd"/><path d="M0.6 12L5.4 9.6" stroke="#cdcdcd" stroke-width="0.8"/></svg><svg style="left:45.9px;top:300.0px" width="2.6" height="2.6" viewBox="0 0 2.6 2.6"><path d="M2.6 0V2.6H0Z" fill="#cdcdcd"/></svg><svg style="left:10.0px;top:306.8px" width="12" height="12" viewBox="0 0 12 12"><path d="M3 11.6C2.4 10.2 2 9.4 1.6 8.6L3 5.4H9L9.2 8C9.2 9.6 8.6 10.6 8 11.6Z" fill="#cdcdcd"/><path d="M3.4 6.4L2.6 2.2M5 6L4.9 0.9M6.8 6L7.4 1.1M8.4 6.6L9.9 2.8M2.6 9L0.7 6.4" stroke="#cdcdcd" stroke-width="1.5" stroke-linecap="round" fill="none"/></svg><svg style="left:23.0px;top:317.79999999999995px" width="2.6" height="2.6" viewBox="0 0 2.6 2.6"><path d="M2.6 0V2.6H0Z" fill="#cdcdcd"/></svg><svg style="left:32.1px;top:306.3px" width="13" height="13" viewBox="0 0 13 13"><circle cx="5" cy="5" r="4.2" fill="none" stroke="#cdcdcd" stroke-width="1.1"/><path d="M8 8L12.2 12.2" stroke="#cdcdcd" stroke-width="1.4" stroke-linecap="round"/></svg><div style="left:5px;top:324px;width:46px;height:0.8px;background:#4a4a4a;"></div><div style="left:5.9px;top:327.8px;width:25.5px;height:25.8px;background:#fff;"></div><div style="left:18.8px;top:341.5px;width:26.4px;height:25.6px;box-sizing:border-box;background:#000;border:0.9px solid #d8d8d8"></div><div style="left:25.1px;top:347.4px;width:13.8px;height:13.8px;box-sizing:border-box;background:#5c5c5c;border:0.9px solid #cfcfcf"></div><svg style="left:38.4px;top:328.2px" width="9" height="9" viewBox="0 0 9 9"><path d="M2 1.8C5 1.6 6.6 3.2 6.6 6.2" fill="none" stroke="#cdcdcd" stroke-width="1.2"/><path d="M0.2 1.8L2.8 0V3.8Z" fill="#cdcdcd"/><path d="M4.6 5.6H8.6L6.6 8.4Z" fill="#cdcdcd"/></svg><svg style="left:4.9px;top:358px" width="9" height="9" viewBox="0 0 9 9"><rect x="0.5" y="0.5" width="5.6" height="5.6" fill="#fff" stroke="#1a1a1a" stroke-width="1"/><rect x="3.2" y="3.2" width="5.2" height="5.2" fill="#1a1a1a" stroke="#e0e0e0" stroke-width="0.8"/><rect x="4.8" y="4.8" width="2" height="2" fill="#e0e0e0"/></svg><div style="left:5.9px;top:373.3px;width:13.1px;height:13.3px;background:#2a2a2a"></div><div style="left:8.6px;top:376.2px;width:7.6px;height:7.6px;background:#0c0c0c;box-shadow:0 0 0 0.6px #3e3e3e"></div><div style="left:20px;top:373.3px;width:14px;height:13.3px;box-sizing:border-box;border:0.7px solid #5e5e5e"></div><div style="left:22.2px;top:375.4px;width:9.6px;height:9.2px;box-sizing:border-box;border:0.8px solid #e0e0e0;background:linear-gradient(90deg,#fff,#111)"></div><div style="left:35px;top:373.3px;width:13.6px;height:13.3px;box-sizing:border-box;border:0.7px solid #5e5e5e"></div><svg style="left:37.2px;top:375.4px" width="9.4" height="9.2" viewBox="0 0 9.4 9.2"><rect width="9.4" height="9.2" fill="#fff"/><path d="M0.4 8.8L9 0.4" stroke="#e8121d" stroke-width="1.7"/></svg><div style="left:5.9px;top:391.5px;width:13.1px;height:12.8px;background:#3a3a3a"></div><div style="left:20px;top:391.5px;width:14px;height:12.8px;box-sizing:border-box;border:0.7px solid #5e5e5e"></div><div style="left:35px;top:391.5px;width:13.6px;height:12.8px;box-sizing:border-box;border:0.7px solid #5e5e5e"></div><svg style="left:8.2px;top:393.6px" width="9" height="9" viewBox="0 0 9 9"><circle cx="3.6" cy="3.6" r="3.1" fill="#8a8a8a" stroke="#cdcdcd" stroke-width="0.8"/><rect x="3.6" y="3.8" width="4.6" height="4.6" rx="0.6" fill="#cdcdcd"/></svg><svg style="left:23px;top:393.6px" width="9" height="9" viewBox="0 0 9 9"><circle cx="3.8" cy="3.6" r="3.1" fill="#8a8a8a" stroke="#cdcdcd" stroke-width="0.8"/><rect x="4" y="4.2" width="4" height="4" rx="0.6" fill="#a8a8a8"/></svg><svg style="left:38.4px;top:394.4px" width="7" height="7" viewBox="0 0 7 7"><circle cx="3.4" cy="3.4" r="2.8" fill="#5a5a5a" stroke="#686868" stroke-width="0.8"/><rect x="3" y="2" width="2.2" height="2.2" fill="#6a6a6a"/></svg><svg style="left:19px;top:410.4px" width="18" height="13" viewBox="0 0 18 13"><rect x="6.4" y="0.5" width="10.6" height="8" fill="#6b6b6b" stroke="#cdcdcd" stroke-width="0.9"/><rect x="6.4" y="0.5" width="10.6" height="1.6" fill="#cdcdcd"/><rect x="0.5" y="4.2" width="9.6" height="7.8" fill="#6b6b6b" stroke="#cdcdcd" stroke-width="0.9"/><rect x="0.5" y="4.2" width="9.6" height="1.4" fill="#cdcdcd"/></svg><svg style="left:22px;top:439px" width="11.4" height="2.8" viewBox="0 0 11.4 2.8"><circle cx="1.3" cy="1.4" r="1.2" fill="#cdcdcd"/><circle cx="5.6" cy="1.4" r="1.2" fill="#cdcdcd"/><circle cx="9.9" cy="1.4" r="1.2" fill="#cdcdcd"/></svg><div style="left:625.8px;top:61.6px;width:179.0px;height:298px;box-shadow:0 1px 5px rgba(0,0,0,.45);background:#535353"></div><div style="left:625.8px;top:61.6px;width:179.0px;height:9.6px;background:#424242;"></div><svg style="left:630px;top:65px" width="6" height="5" viewBox="0 0 6 5"><path d="M0.5 0.3L4.8 4.5M4.8 0.3L0.5 4.5" stroke="#c8c8c8" stroke-width="0.9"/></svg><svg style="left:793.5px;top:63.7px" width="8" height="6" viewBox="-1 -1 8 6"><path d="M2 0L0 2L2 4M5.5 0L3.5 2L5.5 4" fill="none" stroke="#bdbdbd" stroke-width="1"/></svg><div style="left:625.8px;top:71px;width:179.0px;height:19.6px;background:#464646;"></div><div style="left:625.8px;top:71px;width:38.3px;height:19.6px;background:#535353;"></div><div style="left:664.2px;top:71px;width:0.8px;height:19.6px;background:#3b3b3b;"></div><div style="left:725px;top:71px;width:0.8px;height:19.6px;background:#3b3b3b;"></div><div style="left:775.6px;top:71px;width:0.8px;height:19.6px;background:#3b3b3b;"></div><div style="left:664.2px;top:90px;width:140.5999999999999px;height:0.8px;background:#3e3e3e;"></div><span class="t" style="left:632.7px;top:77.18px;font-size:8.56px;font-weight:700;color:#f0f0f0;transform:scaleX(0.9034);">Layers</span><span class="t" style="left:670.8px;top:77.18px;font-size:8.56px;font-weight:700;color:#b4b4b4;transform:scaleX(0.9140);">Asset Export</span><span class="t" style="left:731.8px;top:77.18px;font-size:8.56px;font-weight:700;color:#b4b4b4;transform:scaleX(0.9353);">Artboards</span><svg style="left:792.5px;top:78.2px" width="8" height="7" viewBox="0 0 8 7"><path d="M0 0.6H7.6M0 3.2H7.6M0 5.8H7.6" stroke="#c4c4c4" stroke-width="1"/></svg><div style="left:630.3px;top:96px;width:170.5px;height:242.5px;box-sizing:border-box;border:0.8px solid #5e5e5e;border-top-color:#4a4a4a"></div><div style="left:630.8px;top:96.4px;width:169.5px;height:15.2px;background:#4f647d;"></div><div style="left:630.8px;top:111.5px;width:169.5px;height:0.7px;background:#484848;"></div><svg style="left:633.6px;top:101.0px" width="9" height="6" viewBox="0 0 9 6"><path d="M0.4 3Q4.5 -1.5 8.6 3Q4.5 7.5 0.4 3Z" fill="none" stroke="#dedede" stroke-width="0.9"/><circle cx="4.5" cy="3" r="1.55" fill="none" stroke="#dedede" stroke-width="0.85"/><path d="M4.5 2V3.1H5.4" fill="none" stroke="#dedede" stroke-width="0.55"/></svg><div style="left:662.5px;top:97.4px;width:2.6px;height:13.2px;background:#ff4f4f;"></div><svg style="left:670.2px;top:100.60000000000001px" width="4.6" height="6.8" viewBox="-1 -1 4.6 6.8"><path d="M0 0L2.6 2.4L0 4.8" fill="none" stroke="#dcdcdc" stroke-width="1.05" stroke-linecap="round" stroke-linejoin="round"/></svg><div style="left:683.8px;top:97.10000000000001px;width:14px;height:13.8px;box-sizing:border-box;border:1px solid #161616;border-radius:2.2px;background:#fff;overflow:hidden"></div><div style="left:684.8px;top:98.10000000000001px;width:12px;height:9.2px;background:#d7aa7a;border-radius:1.2px 1.2px 0 0"></div><svg style="left:686px;top:99.60000000000001px" width="10" height="7" viewBox="0 0 10 7"><circle cx="4.6" cy="2.8" r="2" fill="#e6e0dc" stroke="#7d6a5e" stroke-width="0.7"/><rect x="0.6" y="1.8" width="0.8" height="3" fill="#bbb"/><rect x="1.8" y="1.8" width="0.7" height="3" fill="#bbb"/><path d="M7 5.6L8.2 3.8L9.4 5.6Z" fill="#963a34"/><rect x="2.2" y="5" width="2" height="0.9" fill="#9c9a62"/></svg><span class="t" style="left:701.3px;top:100.28px;font-size:8.37px;font-weight:400;color:#ececec;transform:scaleX(0.9405);">Vector Sma...</span><div style="left:778.2px;top:101.0px;width:6.4px;height:6.4px;box-sizing:border-box;border:1px solid #bdbdbd;border-radius:50%"></div><div style="left:630.8px;top:127.1px;width:169.5px;height:0.7px;background:#484848;"></div><svg style="left:633.6px;top:116.6px" width="9" height="6" viewBox="0 0 9 6"><path d="M0.4 3Q4.5 -1.5 8.6 3Q4.5 7.5 0.4 3Z" fill="none" stroke="#dedede" stroke-width="0.9"/><circle cx="4.5" cy="3" r="1.55" fill="none" stroke="#dedede" stroke-width="0.85"/><path d="M4.5 2V3.1H5.4" fill="none" stroke="#dedede" stroke-width="0.55"/></svg><div style="left:662.5px;top:113.0px;width:2.6px;height:13.2px;background:#4fff4f;"></div><div style="left:683.8px;top:112.7px;width:14px;height:13.8px;box-sizing:border-box;border:1px solid #161616;border-radius:2.2px;background:#fff;overflow:hidden"></div><span class="t" style="left:701.3px;top:115.88px;font-size:8.37px;font-weight:400;color:#ececec;transform:scaleX(0.9405);">Vector Sma...</span><div style="left:778.2px;top:116.6px;width:6.4px;height:6.4px;box-sizing:border-box;border:1px solid #bdbdbd;border-radius:50%"></div><div style="left:630.8px;top:142.70000000000002px;width:169.5px;height:0.7px;background:#484848;"></div><svg style="left:633.6px;top:132.20000000000002px" width="9" height="6" viewBox="0 0 9 6"><path d="M0.4 3Q4.5 -1.5 8.6 3Q4.5 7.5 0.4 3Z" fill="none" stroke="#dedede" stroke-width="0.9"/><circle cx="4.5" cy="3" r="1.55" fill="none" stroke="#dedede" stroke-width="0.85"/><path d="M4.5 2V3.1H5.4" fill="none" stroke="#dedede" stroke-width="0.55"/></svg><div style="left:662.5px;top:128.60000000000002px;width:2.6px;height:13.2px;background:#4f4fff;"></div><div style="left:683.8px;top:128.3px;width:14px;height:13.8px;box-sizing:border-box;border:1px solid #161616;border-radius:2.2px;background:#fff;overflow:hidden"></div><span class="t" style="left:701.3px;top:131.48px;font-size:8.37px;font-weight:400;color:#ececec;transform:scaleX(0.9405);">Vector Sma...</span><div style="left:778.2px;top:132.20000000000002px;width:6.4px;height:6.4px;box-sizing:border-box;border:1px solid #bdbdbd;border-radius:50%"></div><div style="left:630.8px;top:158.29999999999998px;width:169.5px;height:0.7px;background:#484848;"></div><svg style="left:633.6px;top:147.79999999999998px" width="9" height="6" viewBox="0 0 9 6"><path d="M0.4 3Q4.5 -1.5 8.6 3Q4.5 7.5 0.4 3Z" fill="none" stroke="#dedede" stroke-width="0.9"/><circle cx="4.5" cy="3" r="1.55" fill="none" stroke="#dedede" stroke-width="0.85"/><path d="M4.5 2V3.1H5.4" fill="none" stroke="#dedede" stroke-width="0.55"/></svg><div style="left:662.5px;top:144.2px;width:2.6px;height:13.2px;background:#ff4fff;"></div><div style="left:683.8px;top:143.89999999999998px;width:14px;height:13.8px;box-sizing:border-box;border:1px solid #161616;border-radius:2.2px;background:#fff;overflow:hidden"></div><span class="t" style="left:701.3px;top:147.08px;font-size:8.37px;font-weight:400;color:#ececec;transform:scaleX(0.9019);">Shape 2</span><div style="left:778.2px;top:147.79999999999998px;width:6.4px;height:6.4px;box-sizing:border-box;border:1px solid #a8a8a8;background:#8e8e8e;border-radius:50%"></div><div style="left:630.8px;top:173.9px;width:169.5px;height:0.7px;background:#484848;"></div><svg style="left:633.6px;top:163.4px" width="9" height="6" viewBox="0 0 9 6"><path d="M0.4 3Q4.5 -1.5 8.6 3Q4.5 7.5 0.4 3Z" fill="none" stroke="#dedede" stroke-width="0.9"/><circle cx="4.5" cy="3" r="1.55" fill="none" stroke="#dedede" stroke-width="0.85"/><path d="M4.5 2V3.1H5.4" fill="none" stroke="#dedede" stroke-width="0.55"/></svg><div style="left:662.5px;top:159.8px;width:2.6px;height:13.2px;background:#4fffff;"></div><div style="left:683.8px;top:159.5px;width:14px;height:13.8px;box-sizing:border-box;border:1px solid #161616;border-radius:2.2px;background:#fff;overflow:hidden"></div><span class="t" style="left:701.3px;top:162.68px;font-size:8.37px;font-weight:400;color:#ececec;transform:scaleX(0.8891);">Shape 1</span><div style="left:778.2px;top:163.4px;width:6.4px;height:6.4px;box-sizing:border-box;border:1px solid #a8a8a8;background:#8e8e8e;border-radius:50%"></div><div style="left:630.8px;top:189.5px;width:169.5px;height:0.7px;background:#484848;"></div><svg style="left:633.6px;top:179.0px" width="9" height="6" viewBox="0 0 9 6"><path d="M0.4 3Q4.5 -1.5 8.6 3Q4.5 7.5 0.4 3Z" fill="none" stroke="#dedede" stroke-width="0.9"/><circle cx="4.5" cy="3" r="1.55" fill="none" stroke="#dedede" stroke-width="0.85"/><path d="M4.5 2V3.1H5.4" fill="none" stroke="#dedede" stroke-width="0.55"/></svg><div style="left:662.5px;top:175.4px;width:2.6px;height:13.2px;background:#ffff4f;"></div><div style="left:683.8px;top:175.1px;width:14px;height:13.8px;box-sizing:border-box;border:1px solid #161616;border-radius:2.2px;background:#fff;overflow:hidden"></div><span class="t" style="left:701.3px;top:178.28px;font-size:8.37px;font-weight:400;color:#ececec;transform:scaleX(0.9345);">Rectangle 1</span><div style="left:778.2px;top:179.0px;width:6.4px;height:6.4px;box-sizing:border-box;border:1px solid #a8a8a8;background:#8e8e8e;border-radius:50%"></div><div style="left:630.8px;top:205.1px;width:169.5px;height:0.7px;background:#484848;"></div><svg style="left:633.6px;top:194.6px" width="9" height="6" viewBox="0 0 9 6"><path d="M0.4 3Q4.5 -1.5 8.6 3Q4.5 7.5 0.4 3Z" fill="none" stroke="#dedede" stroke-width="0.9"/><circle cx="4.5" cy="3" r="1.55" fill="none" stroke="#dedede" stroke-width="0.85"/><path d="M4.5 2V3.1H5.4" fill="none" stroke="#dedede" stroke-width="0.55"/></svg><div style="left:662.5px;top:191.0px;width:2.6px;height:13.2px;background:#808080;"></div><svg style="left:670.2px;top:194.2px" width="4.6" height="6.8" viewBox="-1 -1 4.6 6.8"><path d="M0 0L2.6 2.4L0 4.8" fill="none" stroke="#dcdcdc" stroke-width="1.05" stroke-linecap="round" stroke-linejoin="round"/></svg><div style="left:683.8px;top:190.7px;width:14px;height:13.8px;box-sizing:border-box;border:1px solid #161616;border-radius:2.2px;background:#fff;overflow:hidden"></div><span class="t" style="left:701.3px;top:193.88px;font-size:8.37px;font-weight:400;color:#ececec;transform:scaleX(0.9536);">Background...</span><div style="left:778.2px;top:194.6px;width:6.4px;height:6.4px;box-sizing:border-box;border:1px solid #bdbdbd;border-radius:50%"></div><div style="left:645.2px;top:96.4px;width:0.7px;height:109.2px;background:#484848;"></div><div style="left:661.2px;top:96.4px;width:0.7px;height:109.2px;background:#484848;"></div><div style="left:773px;top:96.4px;width:0.7px;height:109.2px;background:#484848;"></div><div style="left:645.2px;top:96.4px;width:0.7px;height:15.2px;background:#465a72;"></div><div style="left:661.2px;top:96.4px;width:0.7px;height:15.2px;background:#465a72;"></div><div style="left:773px;top:96.4px;width:0.7px;height:15.2px;background:#465a72;"></div><svg style="left:796px;top:97px" width="5" height="5" viewBox="0 0 5 5"><path d="M0 0H4.4V4.4Z" fill="#e6e6e6"/></svg><span class="t" style="left:630.6px;top:343.18px;font-size:8.37px;font-weight:400;color:#e4e4e4;transform:scaleX(0.9045);">7 Layers</span><svg style="left:679px;top:341.5px" width="10" height="10" viewBox="0 0 10 10"><path d="M4.6 1.4H0.6V9.2H8.4V5.2" fill="none" stroke="#d0d0d0" stroke-width="1"/><path d="M4.4 5.4L9 0.8M5.8 0.6H9.2V4" fill="none" stroke="#d0d0d0" stroke-width="1"/></svg><svg style="left:698px;top:342px" width="10" height="10" viewBox="0 0 10 10"><circle cx="3.4" cy="3.4" r="2.8" fill="none" stroke="#6c6c6c" stroke-width="1"/><path d="M5.4 5.4L9 9" stroke="#6c6c6c" stroke-width="1.2"/></svg><svg style="left:717px;top:342.5px" width="10" height="10" viewBox="0 0 10 10"><rect x="0.5" y="0.5" width="5.6" height="5.6" fill="none" stroke="#6c6c6c" stroke-width="0.9"/><rect x="2.6" y="2.6" width="5.8" height="5.8" fill="#6c6c6c" opacity=".8"/></svg><svg style="left:735px;top:342px" width="13" height="10" viewBox="0 0 13 10"><path d="M0.4 0.6H2.4V3.6H4.4M3 2.2L4.6 3.6L3 5" fill="none" stroke="#d0d0d0" stroke-width="0.9"/><rect x="5.8" y="1.6" width="6" height="6.4" fill="none" stroke="#d0d0d0" stroke-width="0.9"/><path d="M8.8 3V6.6M7 4.8H10.6" stroke="#d0d0d0" stroke-width="0.9"/></svg><svg style="left:756.5px;top:342px" width="10" height="10" viewBox="0 0 10 10"><rect x="0.5" y="0.5" width="7.8" height="8.4" fill="none" stroke="#d0d0d0" stroke-width="0.9"/><path d="M4.4 2.6V6.8M2.3 4.7H6.5" stroke="#d0d0d0" stroke-width="0.9"/></svg><svg style="left:775.5px;top:341.5px" width="9" height="11" viewBox="0 0 9 11"><path d="M0.4 1.9H8.2M3 1.8V0.6H5.6V1.8" fill="none" stroke="#d0d0d0" stroke-width="0.9"/><path d="M1.2 2.6H7.4V9.6H1.2Z" fill="none" stroke="#d0d0d0" stroke-width="0.9"/><path d="M3.2 3.8V8.4M5.4 3.8V8.4" stroke="#d0d0d0" stroke-width="0.9"/></svg><div style="left:625.8px;top:354px;width:179.0px;height:0.8px;background:#3c3c3c;"></div><div style="left:626.8px;top:354.8px;width:177.0px;height:4.5px;background:#515151;"></div><svg style="left:708.5px;top:355.7px" width="13.0" height="3" viewBox="0 0 13.0 3"><rect x="0.0" y="0" width="1.5" height="2.6" fill="#3a3a3a"/><rect x="2.6" y="0" width="1.5" height="2.6" fill="#3a3a3a"/><rect x="5.2" y="0" width="1.5" height="2.6" fill="#3a3a3a"/><rect x="7.800000000000001" y="0" width="1.5" height="2.6" fill="#3a3a3a"/><rect x="10.4" y="0" width="1.5" height="2.6" fill="#3a3a3a"/></svg><div style="left:805px;top:49.6px;width:32px;height:562.4px;background:#3a3a3a;"></div><div style="left:807px;top:49.6px;width:27.4px;height:8.6px;background:#424242;"></div><svg style="left:823.8px;top:51px" width="8" height="6" viewBox="-1 -1 8 6"><path d="M2 0L0 2L2 4M5.5 0L3.5 2L5.5 4" fill="none" stroke="#bdbdbd" stroke-width="1"/></svg><div style="left:807px;top:58.4px;width:27.4px;height:553.6px;background:#535353;"></div><svg style="left:813px;top:61.2px" width="15.600000000000001" height="3" viewBox="0 0 15.600000000000001 3"><rect x="0.0" y="0" width="1.5" height="2.6" fill="#3f3f3f"/><rect x="2.6" y="0" width="1.5" height="2.6" fill="#3f3f3f"/><rect x="5.2" y="0" width="1.5" height="2.6" fill="#3f3f3f"/><rect x="7.800000000000001" y="0" width="1.5" height="2.6" fill="#3f3f3f"/><rect x="10.4" y="0" width="1.5" height="2.6" fill="#3f3f3f"/><rect x="13.0" y="0" width="1.5" height="2.6" fill="#3f3f3f"/></svg><svg style="left:815px;top:71.8px" width="12.4" height="8.4" viewBox="0 0 12.4 8.4"><rect width="12.4" height="8.4" fill="#c9c9c9"/><rect x="1" y="1" width="3" height="2.8" fill="#8e8e8e"/><rect x="4.7" y="1" width="3" height="2.8" fill="#7a7a7a"/><rect x="8.4" y="1" width="3" height="2.8" fill="#6e6e6e"/><rect x="1" y="4.6" width="3" height="2.8" fill="#a4a4a4"/><rect x="4.7" y="4.6" width="3" height="2.8" fill="#6e6e6e"/><rect x="8.4" y="4.6" width="3" height="2.8" fill="#8e8e8e"/></svg><svg style="left:815px;top:89px" width="13" height="15" viewBox="0 0 13 15"><rect x="2.8" y="9.6" width="6.8" height="5" fill="#c9c9c9"/><path d="M4.2 9.6C3.4 7.4 0.8 6.4 0.6 3C3 3.6 4.8 6 5.4 9.6Z" fill="#c9c9c9"/><path d="M5.5 9.4C5 6 5 2.6 6.1 0.2C7.3 2.6 7.3 6 6.9 9.4Z" fill="#c9c9c9"/><path d="M7.3 9.6L9 5C9.6 3.4 11.6 2.6 12.8 4.6V6.2C11.6 5.2 10.6 5.6 10.2 6.6L8.9 9.6Z" fill="#c9c9c9"/></svg><svg style="left:815px;top:111px" width="13" height="13" viewBox="0 0 13 13"><circle cx="6.4" cy="3.3" r="3" fill="#c9c9c9"/><circle cx="3.2" cy="7" r="3" fill="#c9c9c9"/><circle cx="9.6" cy="7" r="3" fill="#c9c9c9"/><path d="M6.4 6V11.4M3.6 11.8H9.2" stroke="#c9c9c9" stroke-width="1.3"/></svg><div style="left:807px;top:129.9px;width:27.4px;height:1.6px;background:#3a3a3a;"></div><svg style="left:813px;top:133.4px" width="15.600000000000001" height="3" viewBox="0 0 15.600000000000001 3"><rect x="0.0" y="0" width="1.5" height="2.6" fill="#3f3f3f"/><rect x="2.6" y="0" width="1.5" height="2.6" fill="#3f3f3f"/><rect x="5.2" y="0" width="1.5" height="2.6" fill="#3f3f3f"/><rect x="7.800000000000001" y="0" width="1.5" height="2.6" fill="#3f3f3f"/><rect x="10.4" y="0" width="1.5" height="2.6" fill="#3f3f3f"/><rect x="13.0" y="0" width="1.5" height="2.6" fill="#3f3f3f"/></svg><svg style="left:815px;top:143px" width="13" height="10" viewBox="0 0 13 10"><rect x="0" y="0" width="13" height="1" fill="#c9c9c9"/><rect x="0" y="3.2" width="13" height="1.8" fill="#c9c9c9"/><rect x="0" y="7" width="13" height="2.6" fill="#c9c9c9"/></svg><div style="left:814.8px;top:164px;width:13px;height:9px;box-sizing:border-box;border:1px solid #c9c9c9;background:linear-gradient(90deg,#1a1a1a,#f0f0f0)"></div><svg style="left:814px;top:183px" width="14" height="14" viewBox="0 0 14 14"><circle cx="5" cy="5" r="4.6" fill="#c9c9c9"/><circle cx="8.4" cy="8.4" r="4.4" fill="#8c8c8c" stroke="#c9c9c9" stroke-width="0.9"/></svg><div style="left:807px;top:201.6px;width:27.4px;height:1.6px;background:#3a3a3a;"></div><svg style="left:813px;top:205.4px" width="15.600000000000001" height="3" viewBox="0 0 15.600000000000001 3"><rect x="0.0" y="0" width="1.5" height="2.6" fill="#3f3f3f"/><rect x="2.6" y="0" width="1.5" height="2.6" fill="#3f3f3f"/><rect x="5.2" y="0" width="1.5" height="2.6" fill="#3f3f3f"/><rect x="7.800000000000001" y="0" width="1.5" height="2.6" fill="#3f3f3f"/><rect x="10.4" y="0" width="1.5" height="2.6" fill="#3f3f3f"/><rect x="13.0" y="0" width="1.5" height="2.6" fill="#3f3f3f"/></svg><svg style="left:814px;top:213px" width="15" height="15" viewBox="0 0 15 15"><circle cx="7.3" cy="7.2" r="6.2" fill="none" stroke="#c9c9c9" stroke-width="1.1" stroke-dasharray="1.2 1.3"/><circle cx="7.3" cy="7.2" r="4.3" fill="#c9c9c9"/></svg><svg style="left:814.6px;top:235px" width="14" height="13" viewBox="0 0 14 13"><rect x="3.4" y="0.5" width="9.6" height="9.6" fill="none" stroke="#c9c9c9" stroke-width="1"/><rect x="0.6" y="7" width="4" height="4" fill="#535353" stroke="#c9c9c9" stroke-width="0.9"/><rect x="2.4" y="8.6" width="4" height="4" fill="#8a8a8a" stroke="#c9c9c9" stroke-width="0.9"/></svg><div style="left:807px;top:252.6px;width:27.4px;height:1.6px;background:#3a3a3a;"></div><div style="left:837px;top:49.6px;width:186px;height:9.6px;background:#424242;"></div><svg style="left:1011px;top:51px" width="8" height="6" viewBox="-1 -1 8 6"><path d="M0 0L2 2L0 4M3.5 0L5.5 2L3.5 4" fill="none" stroke="#bdbdbd" stroke-width="1"/></svg><div style="left:837px;top:59px;width:186px;height:553px;background:#535353;"></div><div style="left:837px;top:59px;width:186px;height:19.5px;background:#424242;"></div><div style="left:837px;top:58.1px;width:186px;height:1.1px;background:#3c3c3c;"></div><div style="left:837px;top:59px;width:51.3px;height:19.5px;background:#535353;"></div><div style="left:888.3px;top:59px;width:46.2px;height:19.5px;background:#474747;"></div><div style="left:888.3px;top:59px;width:0.8px;height:19.5px;background:#3b3b3b;"></div><div style="left:934.5px;top:59px;width:0.8px;height:19.5px;background:#3b3b3b;"></div><span class="t" style="left:843.6px;top:64.48px;font-size:8.56px;font-weight:700;color:#f0f0f0;transform:scaleX(0.9082);">Properties</span><span class="t" style="left:895.5px;top:64.48px;font-size:8.56px;font-weight:700;color:#b4b4b4;transform:scaleX(0.9056);">Libraries</span><span class="t" style="left:844.2px;top:87.18px;font-size:8.37px;font-weight:400;color:#e0e0e0;transform:scaleX(0.9366);">No Selection</span><div style="left:837px;top:103.2px;width:176px;height:0.8px;background:#4b4b4b;"></div><span class="t" style="left:844.2px;top:112.98px;font-size:8.37px;font-weight:400;color:#e0e0e0;transform:scaleX(0.9604);">Document</span><span class="t" style="left:875.3px;top:133.58px;font-size:8.37px;font-weight:400;color:#e0e0e0;transform:scaleX(0.9497);">Units:</span><div style="left:900.4px;top:130.2px;width:60.8px;height:13.8px;box-sizing:border-box;background:#464646;border:0.8px solid #5f5f5f;border-radius:2px"></div><span class="t" style="left:904.8px;top:133.38px;font-size:8.37px;font-weight:400;color:#f0f0f0;transform:scaleX(0.9340);">Points</span><svg style="left:951.8px;top:135.4px" width="7" height="4.5" viewBox="-1 -1 7 4.5"><path d="M0 0L2.5 2.5L5 0" fill="none" stroke="#e4e4e4" stroke-width="1" stroke-linecap="round" stroke-linejoin="round"/></svg><span class="t" style="left:862px;top:154.98px;font-size:8.37px;font-weight:400;color:#e0e0e0;transform:scaleX(0.9770);">Artboard:</span><div style="left:900.4px;top:152.1px;width:60.8px;height:13.8px;box-sizing:border-box;background:#4b4b4b;border:0.8px solid #5f5f5f;border-radius:2px"></div><div style="left:901.2px;top:152.9px;width:46.8px;height:12.2px;background:#434343"></div><span class="t" style="left:903.8px;top:154.18px;font-size:8.37px;font-weight:400;color:#f0f0f0;transform:scaleX(0.5584);">1</span><svg style="left:951.8px;top:157.4px" width="7" height="4.5" viewBox="-1 -1 7 4.5"><path d="M0 0L2.5 2.5L5 0" fill="none" stroke="#e4e4e4" stroke-width="1" stroke-linecap="round" stroke-linejoin="round"/></svg><svg style="left:972px;top:156px" width="5" height="7" viewBox="0 0 5 7"><path d="M4 0.5V6.5L0.6 3.5Z" fill="#6b6b6b"/></svg><svg style="left:987.4px;top:156px" width="5" height="7" viewBox="0 0 5 7"><path d="M0.8 0.5V6.5L4.2 3.5Z" fill="#6b6b6b"/></svg><div style="left:900px;top:172.8px;width:76.79999999999995px;height:14.599999999999994px;box-sizing:border-box;border:1px solid #787878;border-radius:2px"></div><span class="t" style="left:912.4px;top:176.38px;font-size:8.37px;font-weight:700;color:#f0f0f0;transform:scaleX(0.8866);">Edit Artboards</span><div style="left:837px;top:203.6px;width:176px;height:0.8px;background:#4b4b4b;"></div><span class="t" style="left:844.2px;top:214.78px;font-size:8.37px;font-weight:400;color:#e0e0e0;transform:scaleX(0.9368);">Ruler &amp; Grids</span><svg style="left:909.6px;top:212.6px" width="13" height="13" viewBox="0 0 13 13"><path d="M0 0H12.6V2.8H2.8V12.4H0Z" fill="#cfcfcf"/><path d="M4.4 1.2V2.8M6.4 1.2V2.8M8.4 1.2V2.8M10.4 1.2V2.8M1.2 4.6H2.8M1.2 6.6H2.8M1.2 8.6H2.8M1.2 10.6H2.8" stroke="#535353" stroke-width="0.8"/></svg><svg style="left:932px;top:212.6px" width="13" height="13" viewBox="0 0 13 13"><path d="M0.5 0.5H12.2V12.2H0.5ZM4.4 0.5V12.2M8.3 0.5V12.2M0.5 4.4H12.2M0.5 8.3H12.2" fill="none" stroke="#cfcfcf" stroke-width="0.9"/></svg><svg style="left:954.3px;top:212.6px" width="13" height="13" viewBox="0 0 13 13"><rect x="1.0" y="1.0" width="2.2" height="2.2" fill="#8c8c8c"/><rect x="3.2" y="1.0" width="2.2" height="2.2" fill="#6a6a6a"/><rect x="5.4" y="1.0" width="2.2" height="2.2" fill="#8c8c8c"/><rect x="7.6000000000000005" y="1.0" width="2.2" height="2.2" fill="#6a6a6a"/><rect x="9.8" y="1.0" width="2.2" height="2.2" fill="#8c8c8c"/><rect x="1.0" y="3.2" width="2.2" height="2.2" fill="#6a6a6a"/><rect x="3.2" y="3.2" width="2.2" height="2.2" fill="#8c8c8c"/><rect x="5.4" y="3.2" width="2.2" height="2.2" fill="#6a6a6a"/><rect x="7.6000000000000005" y="3.2" width="2.2" height="2.2" fill="#8c8c8c"/><rect x="9.8" y="3.2" width="2.2" height="2.2" fill="#6a6a6a"/><rect x="1.0" y="5.4" width="2.2" height="2.2" fill="#8c8c8c"/><rect x="3.2" y="5.4" width="2.2" height="2.2" fill="#6a6a6a"/><rect x="5.4" y="5.4" width="2.2" height="2.2" fill="#8c8c8c"/><rect x="7.6000000000000005" y="5.4" width="2.2" height="2.2" fill="#6a6a6a"/><rect x="9.8" y="5.4" width="2.2" height="2.2" fill="#8c8c8c"/><rect x="1.0" y="7.6000000000000005" width="2.2" height="2.2" fill="#6a6a6a"/><rect x="3.2" y="7.6000000000000005" width="2.2" height="2.2" fill="#8c8c8c"/><rect x="5.4" y="7.6000000000000005" width="2.2" height="2.2" fill="#6a6a6a"/><rect x="7.6000000000000005" y="7.6000000000000005" width="2.2" height="2.2" fill="#8c8c8c"/><rect x="9.8" y="7.6000000000000005" width="2.2" height="2.2" fill="#6a6a6a"/><rect x="1.0" y="9.8" width="2.2" height="2.2" fill="#8c8c8c"/><rect x="3.2" y="9.8" width="2.2" height="2.2" fill="#6a6a6a"/><rect x="5.4" y="9.8" width="2.2" height="2.2" fill="#8c8c8c"/><rect x="7.6000000000000005" y="9.8" width="2.2" height="2.2" fill="#6a6a6a"/><rect x="9.8" y="9.8" width="2.2" height="2.2" fill="#8c8c8c"/><rect x="0.5" y="0.5" width="12" height="12" fill="none" stroke="#a8a8a8" stroke-width="0.8"/></svg><div style="left:837px;top:232.4px;width:176px;height:0.8px;background:#4b4b4b;"></div><span class="t" style="left:844.2px;top:243.18px;font-size:8.37px;font-weight:400;color:#e0e0e0;transform:scaleX(0.9057);">Guides</span><div style="left:908.2px;top:239px;width:16px;height:16px;background:#2c2c2c;border-radius:2px"></div><svg style="left:910px;top:241px" width="13" height="12" viewBox="0 0 13 12"><path d="M3.4 0V12M5.6 0V12M0 3.4H12.4M0 8.4H12.4" stroke="#f0f0f0" stroke-width="0.9"/></svg><svg style="left:932px;top:241px" width="14" height="13" viewBox="0 0 14 13"><path d="M3 0V11M5.2 0V11M0 3H11.4M0 6H7" stroke="#858585" stroke-width="0.9"/><rect x="7.4" y="7.6" width="5.2" height="4.4" fill="#a0a0a0"/><path d="M8.4 7.6V6.4A1.6 1.6 0 0 1 11.6 6.4V7.6" fill="none" stroke="#a0a0a0" stroke-width="0.8"/></svg><div style="left:952.6px;top:239px;width:16.4px;height:16px;background:#2c2c2c;border-radius:2px"></div><svg style="left:954.4px;top:240.6px" width="14" height="14" viewBox="0 0 14 14"><path d="M3.4 0.6V12.6M1 4.4H10.4M3.6 4.4L6.4 2.2M3.6 4.4L6.4 6.8" fill="none" stroke="#f0f0f0" stroke-width="0.9"/><path d="M10.8 6.4L8.2 10H10L9 13L12.4 8.8H10.4L11.6 6.4Z" fill="#f0f0f0"/></svg><div style="left:837px;top:260.8px;width:176px;height:0.8px;background:#4b4b4b;"></div><span class="t" style="left:844.2px;top:271.18px;font-size:8.37px;font-weight:400;color:#e0e0e0;transform:scaleX(0.9318);">Snap Options</span><div style="left:908.2px;top:267.2px;width:16px;height:15.8px;background:#2c2c2c;border-radius:2px"></div><svg style="left:910.6px;top:269.6px" width="12" height="11" viewBox="0 0 12 11"><rect x="1.4" y="0" width="0.9" height="11" fill="#f0f0f0"/><rect x="0.6" y="4" width="2.5" height="2.8" fill="#f0f0f0"/><path d="M4.6 3.4H8A2.1 2.1 0 0 1 8 7.6H4.6" fill="none" stroke="#f0f0f0" stroke-width="1.3"/></svg><svg style="left:932px;top:269.4px" width="13" height="12" viewBox="0 0 13 12"><path d="M0 0.6H4.4" stroke="#bdbdbd" stroke-width="0.6"/><path d="M0 2.6H4.4" stroke="#bdbdbd" stroke-width="0.6"/><path d="M0 4.6H4.4" stroke="#bdbdbd" stroke-width="0.6"/><path d="M0 6.6H4.4" stroke="#bdbdbd" stroke-width="0.6"/><path d="M0 8.6H4.4" stroke="#bdbdbd" stroke-width="0.6"/><path d="M0 10.6H4.4" stroke="#bdbdbd" stroke-width="0.6"/><path d="M0.5 0V11.4M2.4 0V11.4M4.3 0V11.4" stroke="#bdbdbd" stroke-width="0.7"/><path d="M6.2 3.6H9.2A2 2 0 0 1 9.2 7.6H6.2" fill="none" stroke="#bdbdbd" stroke-width="1.2" stroke-dasharray="2.2 0.8"/></svg><svg style="left:954.6px;top:269.6px" width="12" height="11" viewBox="0 0 12 11"><rect x="0.3" y="0.2" width="2.4" height="2.4" fill="#bdbdbd"/><rect x="0.3" y="3.9" width="2.4" height="2.8" fill="#bdbdbd"/><rect x="0.3" y="8" width="2.4" height="2.4" fill="#bdbdbd"/><path d="M4.6 3.4H7.8A2 2 0 0 1 7.8 7.4H4.6" fill="none" stroke="#bdbdbd" stroke-width="1.2" stroke-dasharray="2.2 0.8"/></svg><div style="left:837px;top:288.8px;width:176px;height:0.8px;background:#4b4b4b;"></div><span class="t" style="left:844.2px;top:298.18px;font-size:8.37px;font-weight:400;color:#e0e0e0;transform:scaleX(0.9140);">Preferences</span><span class="t" style="left:844.2px;top:317.68px;font-size:8.37px;font-weight:400;color:#e0e0e0;transform:scaleX(0.9548);">Keyboard Increment:</span><div style="left:923.4px;top:313.7px;width:43.2px;height:14.3px;box-sizing:border-box;background:#434343;border:0.8px solid #5a5a5a;border-radius:2px"></div><span class="t" style="left:927px;top:316.28px;font-size:8.37px;font-weight:400;color:#f0f0f0;transform:scaleX(1.0177);">1 pt</span><div style="left:844.8px;top:337.5px;width:9px;height:8.8px;box-sizing:border-box;border:1px solid #a2a2a2;border-radius:1.6px;background:#4e4e4e"></div><span class="t" style="left:857.7px;top:338.28px;font-size:8.37px;font-weight:400;color:#e0e0e0;transform:scaleX(0.9099);">Use Preview Bounds</span><div style="left:844.8px;top:355.4px;width:9px;height:8.8px;box-sizing:border-box;border:1px solid #a2a2a2;border-radius:1.6px;background:#4e4e4e"></div><span class="t" style="left:857.7px;top:356.18px;font-size:8.37px;font-weight:400;color:#e0e0e0;transform:scaleX(0.9081);">Scale Corners</span><div style="left:844.8px;top:372.8px;width:9px;height:8.8px;box-sizing:border-box;border:1px solid #a2a2a2;border-radius:1.6px;background:#4e4e4e"></div><span class="t" style="left:857.7px;top:373.58px;font-size:8.37px;font-weight:400;color:#e0e0e0;transform:scaleX(0.9185);">Scale Strokes &amp; Effects</span><div style="left:837px;top:393.2px;width:176px;height:0.8px;background:#4b4b4b;"></div><span class="t" style="left:844.2px;top:407.48px;font-size:8.37px;font-weight:400;color:#e0e0e0;transform:scaleX(0.9673);">Quick Actions</span><div style="left:844.2px;top:424px;width:86.29999999999995px;height:15px;box-sizing:border-box;border:1px solid #787878;border-radius:2px"></div><span class="t" style="left:857.6px;top:427.78px;font-size:8.37px;font-weight:400;color:#f0f0f0;transform:scaleX(0.9537);">Document Setup</span><div style="left:938px;top:424px;width:74.79999999999995px;height:15px;box-sizing:border-box;border:1px solid #787878;border-radius:2px"></div><span class="t" style="left:954.5px;top:427.78px;font-size:8.37px;font-weight:400;color:#f0f0f0;transform:scaleX(0.9206);">Preferences</span><div style="left:1021.8px;top:49px;width:1.2px;height:561px;background:#565656;"></div>
</body></html>
